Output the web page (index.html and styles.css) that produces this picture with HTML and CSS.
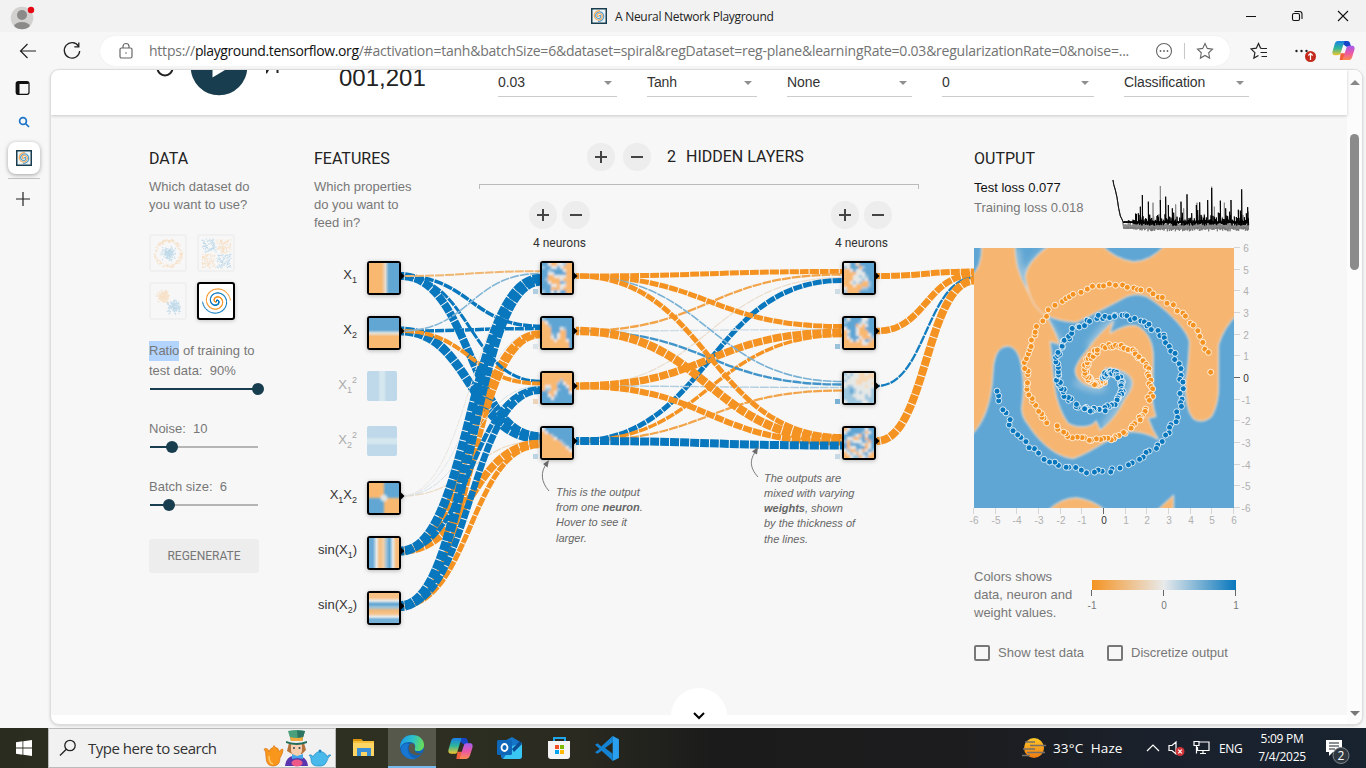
FILE: index.html
```html
<!DOCTYPE html>
<html lang="en">
<head>
<meta charset="utf-8">
<title>A Neural Network Playground</title>
<link rel="stylesheet" href="styles.css">
</head>
<body>
<svg width="0" height="0" class="defs">
  <defs>
    <symbol id="logo" viewBox="0 0 16 16">
      <rect x=".75" y=".75" width="14.5" height="14.5" fill="#eef4f6" stroke="#183d4e" stroke-width="1.500"/>
      <path d="M8 8Q9.500 6.500 9.800 8.500 9.500 11 7 10.500 4 9.500 4.800 6.500 6.500 3 10 4.200 13.500 6 12.500 10 11 13.500 7 13.300" fill="none" stroke="#5ba3d0" stroke-width="1.300"/>
      <path d="M8 8Q6.500 9.500 6.200 7.500 6.500 5 9 5.500 12 6.500 11.200 9.500 9.500 13 6 11.800 2.500 10 3.500 6 5 2.500 9 2.700" fill="none" stroke="#f5ae5e" stroke-width="1.200"/>
    </symbol>
    <symbol id="copilot" viewBox="0 0 24 22">
      <linearGradient id="cpa" x1="0" y1="0" x2="0" y2="1"><stop offset="0" stop-color="#1a7fe8"/><stop offset=".5" stop-color="#2db59a"/><stop offset="1" stop-color="#f3c62d"/></linearGradient>
      <linearGradient id="cpb" x1="0" y1="0" x2="0" y2="1"><stop offset="0" stop-color="#a45df0"/><stop offset=".5" stop-color="#e957a8"/><stop offset="1" stop-color="#ff8a4c"/></linearGradient>
      <path d="M9 1h7c2 0 2.500 1 3 3l1 3h-5L11 4z" fill="#1646c8"/>
      <path d="M8 21h6c2 0 3-1 3.500-3l1-4H9z" fill="#f2603b"/>
      <path d="M6 1h7l-4 13c-.5 1.700-1.500 2-3 2H3c-2.500 0-3-2-2.500-4L3 3.500C3.500 2 4.500 1 6 1z" fill="url(#cpa)"/>
      <path d="M18 6h3c2.500 0 3 2 2.500 4L21 18c-.6 2-2 3-4 3h-6l4-12.500C15.500 7 16 6 18 6z" fill="url(#cpb)"/>
    </symbol>
    <linearGradient id="scale"><stop offset="0" stop-color="#f59322"/><stop offset=".5" stop-color="#e8eaeb"/><stop offset="1" stop-color="#0877bd"/></linearGradient>
    <linearGradient id="gx1"><stop offset=".42" stop-color="#f9b870"/><stop offset=".55" stop-color="#e5dcd0"/><stop offset=".66" stop-color="#62a7d4"/></linearGradient>
    <linearGradient id="gx2" x1="0" y1="0" x2="0" y2="1"><stop offset=".4" stop-color="#62a7d4"/><stop offset=".5" stop-color="#e0e2df"/><stop offset=".62" stop-color="#f9b870"/></linearGradient>
    <linearGradient id="gq"><stop offset=".36" stop-color="#62a7d4"/><stop offset=".45" stop-color="#9ccbe0"/><stop offset=".57" stop-color="#9ccbe0"/><stop offset=".65" stop-color="#62a7d4"/></linearGradient>
    <linearGradient id="gqv" href="#gq" x1="0" y1="0" x2="0" y2="1"/>
    <linearGradient id="gs1"><stop offset="0" stop-color="#6aaad6"/><stop offset=".13" stop-color="#6aaad6"/><stop offset=".25" stop-color="#e6e8e8"/><stop offset=".36" stop-color="#f6bd7c"/><stop offset=".48" stop-color="#f1cfa8"/><stop offset=".6" stop-color="#91bfdc"/><stop offset=".68" stop-color="#5ba2d0"/><stop offset=".8" stop-color="#e8eaeb"/><stop offset=".9" stop-color="#f8bd7c"/><stop offset="1" stop-color="#f8bd7c"/></linearGradient>
    <linearGradient id="gs2" x1="0" y1="0" x2="0" y2="1"><stop offset="0" stop-color="#f7c084"/><stop offset=".15" stop-color="#f7c084"/><stop offset=".26" stop-color="#e8eaeb"/><stop offset=".37" stop-color="#5ba2d0"/><stop offset=".47" stop-color="#9cc3da"/><stop offset=".6" stop-color="#f6b873"/><stop offset=".7" stop-color="#f3c592"/><stop offset=".79" stop-color="#e8eaeb"/><stop offset=".88" stop-color="#74b0d8"/><stop offset="1" stop-color="#74b0d8"/></linearGradient>
    <filter id="soft"><feGaussianBlur stdDeviation=".9"/></filter>
    <filter id="edge"><feGaussianBlur stdDeviation="2.600"/></filter>
    <filter id="haze"><feGaussianBlur stdDeviation="9"/></filter>
    <clipPath id="cell"><rect width="30" height="30"/></clipPath>
    <clipPath id="mapclip"><rect x="42" y="39" width="780" height="780"/></clipPath>
  </defs>
</svg>

<header class="titlebar">
  <svg class="avatar" width="26" height="26" viewBox="0 0 26 26"><circle cx="12" cy="13" r="11.300" fill="#d3d1cf"/><circle cx="12" cy="10" r="5" fill="#8c8a88"/><path d="M4 21a8.500 6 0 0 1 16 0 11.300 11.300 0 0 1-16 0z" fill="#8c8a88"/><circle cx="21" cy="5" r="3.200" fill="#e50914"/></svg>
  <div class="window-title"><svg width="16" height="16"><use href="#logo"/></svg><span>A Neural Network Playground</span></div>
  <svg class="window-buttons" width="110" height="14" viewBox="0 0 110 14" fill="none" stroke="#111" stroke-width="1.100"><path d="M2 7.500h10M94 2l10 10M104 2L94 12"/><rect x="48.500" y="4.500" width="7" height="7" rx="1.500"/><path d="M50.500 2.500h5q2.500 0 2.500 2.500v5"/></svg>
</header>

<nav class="toolbar">
  <svg class="back" width="20" height="20" viewBox="0 0 20 20" fill="none" stroke="#222" stroke-width="1.200"><path d="M18 10H2.500M9.500 3L2.500 10l7 7"/></svg>
  <svg class="reload" width="20" height="20" viewBox="0 0 20 20" fill="none" stroke="#222" stroke-width="1.300"><path d="M16.500 5.200A7.700 7.700 0 1 0 17.700 10M16.800 1.500v4.300h-4.500"/></svg>
  <div class="address">
    <svg width="16" height="18" viewBox="0 0 16 18" fill="none" stroke="#666" stroke-width="1.200"><rect x="2" y="6" width="12" height="10" rx="1.500"/><path d="M5 6V4.500a3 3 0 0 1 6 0V6"/><circle cx="8" cy="11" r=".8" fill="#666" stroke="none"/></svg>
    <span class="url">https://<b>playground.tensorflow.org</b>/#activation=tanh&amp;batchSize=6&amp;dataset=spiral&amp;regDataset=reg-plane&amp;learningRate=0.03&amp;regularizationRate=0&amp;noise=...</span>
    <svg width="60" height="18" viewBox="0 0 60 18" fill="none" stroke="#666" stroke-width="1.100"><circle cx="9" cy="9" r="7.500"/><g fill="#666" stroke="none"><circle cx="5.500" cy="9" r=".9"/><circle cx="9" cy="9" r=".9"/><circle cx="12.500" cy="9" r=".9"/></g><path d="M29.500 1v16" stroke="#c8c8c8"/><path d="M50 1.500l2.300 4.900 5.200.7-3.800 3.700.9 5.300-4.600-2.600-4.600 2.600.9-5.300-3.800-3.700 5.200-.7z"/></svg>
  </div>
  <svg class="fav" width="18" height="18" viewBox="0 0 18 18" fill="none" stroke="#222" stroke-width="1.200"><path d="M11.500 6.500L10.500 6 8.500 1.500 6.300 6.200l-5.300.7 3.900 3.700-1 5.400 4.600-2.600M11.500 6.500H17M10.500 10.500H17M11.500 14.500H17"/></svg>
  <svg class="more" width="24" height="22" viewBox="0 0 24 22"><g fill="#222"><circle cx="3.500" cy="9" r="1.200"/><circle cx="8.500" cy="9" r="1.200"/><circle cx="13.500" cy="9" r="1.200"/></g><circle cx="17.500" cy="14.500" r="5.500" fill="#c42b1c"/><path d="M17.500 18v-6.500M15.300 13.500l2.200-2.200 2.200 2.200" stroke="#fff" stroke-width="1.200" fill="none"/></svg>
  <svg class="cop" width="23" height="21"><use href="#copilot"/></svg>
</nav>

<div class="workspace">
  <aside class="tabs">
    <svg width="16" height="16" viewBox="0 0 16 16"><rect x="1.200" y="1.700" width="12.800" height="12.600" rx="2" fill="none" stroke="#111" stroke-width="1.200"/><path d="M1 2.500h3.500V14.500H2.500Q1 14.500 1 13zM1.500 2h12v2h-12z" fill="#111"/></svg>
    <svg class="find" width="12" height="12" viewBox="0 0 12 12" fill="none" stroke="#1b74c9" stroke-width="1.700"><circle cx="5" cy="5" r="3.400"/><path d="M7.500 7.500L11 11"/></svg>
    <div class="active-tab"><svg width="16" height="16"><use href="#logo"/></svg></div>
    <svg class="new-tab" width="14" height="14" viewBox="0 0 14 14" stroke="#222" stroke-width="1.200"><path d="M7 0v14M0 7h14"/></svg>
  </aside>

  <div class="page">
    <div class="content">
      <section class="controls">
        <svg class="playback" width="140" height="26" viewBox="149 70 140 26"><circle cx="165" cy="68" r="7.500" fill="none" stroke="#222" stroke-width="2"/><circle cx="219" cy="67" r="28.300" fill="#183d4e"/><path d="M212.500 54v23.500L230 67z" fill="#fff"/><path d="M266 70h3l-2 3.500h-1zM276.500 70h2v3h-2z" fill="#222"/></svg>
        <div class="epoch">001,201</div>
        <div class="select s1">0.03</div>
        <div class="select s2">Tanh</div>
        <div class="select s3">None</div>
        <div class="select s4">0</div>
        <div class="select s5">Classification</div>
      </section>

      <main>
        <section class="data">
          <h4>DATA</h4>
          <p>Which dataset do<br>you want to use?</p>
          <div class="datasets">
            <svg id="d-circle" viewBox="0 0 34 34"></svg><svg id="d-xor" viewBox="0 0 34 34"></svg>
            <svg id="d-gauss" viewBox="0 0 34 34"></svg><svg id="d-spiral" class="chosen" viewBox="0 0 34 34"></svg>
          </div>
          <div class="field"><label><mark>Ratio</mark> of training to<br>test data: &nbsp;90%</label><svg width="118" height="18"><path d="M1 9h108" stroke="#183d4e" stroke-width="2"/><circle cx="109" cy="9" r="6" fill="#183d4e"/></svg></div>
          <div class="field"><label>Noise: &nbsp;10</label><svg width="118" height="18"><path d="M1 9h108" stroke="#b5b5b5" stroke-width="2"/><path d="M1 9h22" stroke="#183d4e" stroke-width="2"/><circle cx="23" cy="9" r="6" fill="#183d4e"/></svg></div>
          <div class="field"><label>Batch size: &nbsp;6</label><svg width="118" height="18"><path d="M1 9h108" stroke="#b5b5b5" stroke-width="2"/><path d="M1 9h19" stroke="#183d4e" stroke-width="2"/><circle cx="20" cy="9" r="6" fill="#183d4e"/></svg></div>
          <button class="regen">REGENERATE</button>
        </section>

        <section class="network">
          <div class="net-head">
            <div class="features"><h4>FEATURES</h4><p>Which properties<br>do you want to<br>feed in?</p></div>
            <div class="hidden">
              <div class="layer-row"><i class="round plus"></i><i class="round"></i><span class="count">2</span><span>HIDDEN LAYERS</span></div>
              <div class="bracket"></div>
              <div class="neuron-row">
                <div class="neurons"><div><i class="round plus"></i><i class="round"></i></div>4 neurons</div>
                <div class="neurons"><div><i class="round plus"></i><i class="round"></i></div>4 neurons</div>
              </div>
            </div>
          </div>
          <svg id="net" width="660" height="390" viewBox="314 250 660 390">
            <g id="links" fill="none"></g>
            <g id="nodes"></g>
            <g class="labels">
              <text x="357" y="279">X<tspan class="sub" dy="4">1</tspan></text>
              <text x="357" y="334">X<tspan class="sub" dy="4">2</tspan></text>
              <text class="off" x="357" y="389">X<tspan class="sub" dy="4">1</tspan><tspan class="sub" dy="-10">2</tspan></text>
              <text class="off" x="357" y="444">X<tspan class="sub" dy="4">2</tspan><tspan class="sub" dy="-10">2</tspan></text>
              <text x="357" y="499">X<tspan class="sub" dy="4">1</tspan><tspan dy="-4">X</tspan><tspan class="sub" dy="4">2</tspan></text>
              <text x="357" y="554">sin(X<tspan class="sub" dy="4">1</tspan><tspan dy="-4">)</tspan></text>
              <text x="357" y="609">sin(X<tspan class="sub" dy="4">2</tspan><tspan dy="-4">)</tspan></text>
            </g>
            <g fill="none" stroke="#7a7a7a"><path d="M549 491C541 482 540 472 547 463M758 477C749 467 750 459 756 451"/></g>
            <path d="M549 460l-6 4 4.500 3.500zM758 447l-6 4.500 5 3z" fill="#6a6a6a"/>
            <g class="callout">
              <text x="556" y="496">This is the output</text><text x="556" y="511">from one <tspan font-weight="bold">neuron</tspan>.</text><text x="556" y="526">Hover to see it</text><text x="556" y="542">larger.</text>
              <text x="764" y="482">The outputs are</text><text x="764" y="497">mixed with varying</text><text x="764" y="512"><tspan font-weight="bold">weights</tspan>, shown</text><text x="764" y="527">by the thickness of</text><text x="764" y="543">the lines.</text>
            </g>
          </svg>
        </section>

        <section class="output">
          <div class="out-head">
            <div><h4>OUTPUT</h4><div class="loss test">Test loss 0.077</div><div class="loss">Training loss 0.018</div></div>
            <svg id="chart" width="138" height="56" viewBox="1113 178 138 56" fill="none"></svg>
          </div>
          <svg id="heatmap" width="276" height="282" viewBox="974 248 276 282">
            <g transform="translate(960 235) scale(.333333)" clip-path="url(#mapclip)">
              <rect x="42" y="39" width="780" height="780" fill="#60a6d4"/>
              <g filter="url(#haze)" fill="none" stroke="#dfe5e6" stroke-width="14" opacity=".6"><path d="M170 40Q172 100 200 155L300 325M385 340Q415 285 460 255M195 120Q220 75 265 40M445 400Q520 410 515 450L430 580M345 440Q390 470 435 460"/></g>
              <g filter="url(#edge)" fill="#f6b671" stroke="#e4e5e1" stroke-width="3">
                <path d="M65 30L165 30C167 90 178 115 192 145C215 195 235 215 262 245C280 280 290 300 300 328L270 320C276 350 276 400 282 440C288 490 300 530 325 565Q350 580 385 573Q400 570 408 557Q416 570 420 585C450 565 475 530 490 500C500 480 518 465 517 442C515 420 490 402 435 400L437 445Q425 465 390 455Q345 440 345 405Q350 380 385 340C405 310 430 285 460 258L450 295Q500 265 530 272C560 285 580 320 580 365L578 500Q582 525 588 545L565 550Q577 585 596 614Q550 587 500 591C450 605 400 650 340 671C280 665 230 610 205 570Q183 545 185 515Q195 460 185 400C178 350 160 334 142 334C115 336 104 360 100 400C96 470 88 545 35 600V120Q65 100 65 30Z"/>
                <path d="M270 30Q202 77 195 125C205 180 220 215 250 237Q300 262 350 262C400 237 460 207 500 185Q530 173 560 185C610 215 680 280 688 320Q686 390 676 440Q675 525 700 552Q728 568 755 545Q775 510 776 460V330Q790 280 830 240V30H615Q570 80 520 80Q465 72 425 30Z"/>
                <path d="M265 825Q305 788 350 788Q400 795 435 825ZM592 825L641 780V825Z"/>
              </g>
            </g>
            <g id="dots" stroke="#fff" stroke-opacity=".8"></g>
            <g id="axes"></g>
          </svg>
          <div class="legend">
            <p>Colors shows<br>data, neuron and<br>weight values.</p>
            <svg width="160" height="36" viewBox="0 0 160 36"><rect x="6" width="144" height="10" fill="url(#scale)"/><path d="M5.500 10v6M77.500 10v6M149.500 10v6" stroke="#666"/><g class="ticks"><text x="6" y="29">-1</text><text x="78" y="29">0</text><text x="150" y="29">1</text></g></svg>
          </div>
          <div class="checks"><span><i></i>Show test data</span><span><i></i>Discretize output</span></div>
        </section>
      </main>
      <div class="more-circle"><svg width="14" height="10" viewBox="0 0 14 10"><path d="M2 2l5 5 5-5" fill="none" stroke="#000" stroke-width="2"/></svg></div>
    </div>
    <div class="scrollbar"><i class="up"></i><i class="thumb"></i><i class="down"></i></div>
  </div>
</div>

<footer class="taskbar">
  <div class="start"><svg width="16" height="16" viewBox="0 0 16 16" fill="#fff"><path d="M0 2.200L6.500 1.300V7.500H0zM7.300 1.200L16 0v7.500H7.300zM0 8.400h6.500v6.300L0 13.800zM7.300 8.400H16V16l-8.700-1.200z"/></svg></div>
  <div class="search">
    <svg width="18" height="18" viewBox="0 0 18 18" fill="none" stroke="#222" stroke-width="1.300"><circle cx="11" cy="6.500" r="5.200"/><path d="M7.300 10.200L1 16.500"/></svg>
    <span>Type here to search</span>
    <svg class="party" width="68" height="38" viewBox="0 0 68 38">
      <path d="M1 20q4-2 5 3 1-4 4-4.500l1-2 1.500 2q3 0 3.500 4 4-4 4-1.500 0 3-3 8 0 8-7 8t-7-9Q3 22 1 20z" fill="#f9961c" stroke="#d46c0b" stroke-width=".6"/>
      <path d="M6 27q0 7 4 8" stroke="#ffc768" stroke-width="1.500" fill="none"/>
      <path d="M22 37q1-9 8-10h6q8 1 9 10z" fill="#5a36ae"/><path d="M26 14h15l2 7-4 4H29l-5-3z" fill="#b5733c"/><path d="M28 14h11v8q-1 5-5.500 5T28 22z" fill="#f6cfae"/>
      <path d="M25 2q9-2 17 0l-3 10H28z" fill="#4aa07a"/><path d="M34 1.500q5 0 8 .5l-3 10h-4z" fill="#2b7562"/><path d="M27 8q7 2 13 0l-.5 4H28z" fill="#f0a93c"/><path d="M23 12q10 4 21 0v2q-10 4-21 0z" fill="#246d5a"/>
      <circle cx="31" cy="19" r="1" fill="#345"/><circle cx="36.500" cy="19" r="1" fill="#345"/><path d="M29 25l5 2 6-2v5l-6-1-5 1z" fill="#45a5e8"/><ellipse cx="34" cy="34" rx="5.500" ry="3.500" fill="#ee5a87"/>
      <path d="M46 26q3-1 4 2 2-5 7-5.500 6 .5 7 5.500 1-3 4-2-3 2-4 6-2 5-6 5h-4q-6 0-6-7-.5-3-2-4z" fill="#49b8ea" stroke="#1c86c4" stroke-width=".6"/><circle cx="57" cy="22" r="1.500" fill="#1c86c4"/>
    </svg>
  </div>
  <div class="apps">
    <div><svg width="24" height="20" viewBox="0 0 24 20"><path d="M1 1h8l2 2h11v15H1z" fill="#f5bf3a"/><path d="M1 1h8l1.500 2H1z" fill="#d9920b"/><path d="M1 5h21v13H1z" fill="#fdd565"/><path d="M5 18V10h14v8h-4v-4H9v4z" fill="#3b8fd6"/></svg></div>
    <div class="running"><svg width="26" height="26" viewBox="0 0 26 26"><linearGradient id="eg" x1="0" y1=".3" x2="1" y2=".5"><stop offset="0" stop-color="#1f9be8"/><stop offset=".5" stop-color="#2bc0c9"/><stop offset="1" stop-color="#69de55"/></linearGradient><circle cx="13" cy="13" r="12" fill="#1263b8"/><path d="M1 12C2 4 8 1 13 1c8 0 12 5 12 10 0 4-3 6-6 6-4 0-4-2-3-3 1-4-2-6-6-6-5 0-8 3-9 6z" fill="url(#eg)"/><path d="M16 13q-2 8 8 6-3 3-8 2-8-2-6-10 2-3 5-1z" fill="#56584c"/><path d="M10 10c-4 7 1 14 7 15-5 1-11-1-14-6C0 12 6 8 10 10z" fill="#1877d0"/></svg></div>
    <div><svg width="25" height="23"><use href="#copilot"/></svg></div>
    <div><svg width="26" height="24" viewBox="0 0 26 24"><path d="M4 7l11-6 10 6v13q0 3-3 3H7q-3 0-3-3z" fill="#1475c9"/><path d="M15 10l10-3v13q0 3-3 3H6z" fill="#39c6f3"/><path d="M15 13L23 5l2 3-8 8z" fill="#0b4c93"/><rect y="4" width="15" height="15" rx="1.500" fill="#0f67ba"/><ellipse cx="7.500" cy="11.500" rx="3" ry="3.500" fill="none" stroke="#fff" stroke-width="1.800"/></svg></div>
    <div><svg width="24" height="24" viewBox="0 0 24 24"><path d="M7 6V2h11v4" fill="none" stroke="#22a6ea" stroke-width="2"/><path d="M1 5h22v15q0 3-3 3H4q-3 0-3-3z" fill="#f4f4f4"/><path d="M8 9h4v4H8z" fill="#f25022"/><path d="M13 9h4v4h-4z" fill="#7fba00"/><path d="M8 14h4v4H8z" fill="#00a4ef"/><path d="M13 14h4v4h-4z" fill="#ffb900"/></svg></div>
    <div><svg width="25" height="25" viewBox="0 0 24 24"><path d="M17 0l6 3v18l-6 3z" fill="#2a9ff0"/><path d="M17 0L6 10 2.500 7 0 8.500 14 21l3 3V17L9 11l8-5z" fill="#1583d1"/><path d="M0 15.500L2.500 17 17 6V0L5 12z" fill="#1583d1"/></svg></div>
  </div>
  <div class="tray">
    <svg width="26" height="24" viewBox="0 0 26 24"><linearGradient id="sun" x1="0" y1="0" x2="0" y2="1"><stop offset="0" stop-color="#ffc928"/><stop offset="1" stop-color="#ef7a12"/></linearGradient><circle cx="13" cy="12" r="10" fill="url(#sun)"/><path d="M4 6h10M9 9.500h16M2 13h12M6 16.500h18M1 19.500h8" stroke="#77706a" stroke-width="1.300"/></svg>
    <span class="weather">33°C&nbsp; Haze</span>
    <svg class="tray-icons" width="66" height="18" viewBox="0 0 66 18" fill="none" stroke="#fff" stroke-width="1.200"><path d="M1 12l6-6 6 6M23 6.500h3l4-3.500v12l-4-3.500h-3zM52.500 3H63v8.500H51.500V8M57 11.500v3M54 14.500h6M48 2.500h5v4h-5zM50.500 6.500v8"/><circle cx="34" cy="12.500" r="4.500" fill="#d13438" stroke="none"/><path d="M32.200 10.700l3.600 3.600M35.800 10.700l-3.600 3.600" stroke-width="1.100"/></svg>
    <span class="lang">ENG</span>
    <span class="clock">5:09 PM<br>7/4/2025</span>
    <svg class="notes" width="26" height="26" viewBox="0 0 26 26"><path d="M1 2h16v12H8l-4 4v-4H1z" fill="#fff"/><path d="M4 5h10M4 8h10M4 11h6" stroke="#1b222c" stroke-width="1"/><circle cx="16" cy="17.500" r="8" fill="#303840" stroke="#83888c"/><text x="16" y="22" text-anchor="middle" fill="#fff" font-family="Open Sans" font-size="12">2</text></svg>
  </div>
</footer>
<script src="playground.js"></script>
</body>
</html>
```
FILE: styles.css
```css
* { box-sizing: border-box; }
body { margin: 0; width: 1366px; height: 768px; overflow: hidden; display: flex; flex-direction: column; background: #f7f7f7; font-family: "Liberation Sans", Arial, sans-serif; }
.defs { position: absolute; }
svg { display: block; flex: none; }
h4, p { margin: 0; }

.titlebar { height: 32px; background: #f2f2f2; display: flex; align-items: center; font: 12px "Open Sans", sans-serif; color: #222; flex: none; }
.avatar { margin: 3px 0 0 10px; }
.window-title { display: flex; align-items: center; gap: 8px; margin-left: 555px; width: 300px; white-space: nowrap; letter-spacing: -.28px; }
.window-buttons { margin-left: 353px; }

.toolbar { height: 37px; display: flex; align-items: center; flex: none; }
.back { margin-left: 18px; }
.reload { margin-left: 24px; }
.address { margin: 1px 0 0 18px; width: 1130px; height: 30px; border-radius: 15px; background: #fff; display: flex; align-items: center; padding-left: 18px; box-shadow: 0 0 1px #ddd; }
.url { font: 14px "Open Sans", sans-serif; letter-spacing: -.23px; color: #737373; margin: -1px 0 0 15px; width: 1006px; white-space: nowrap; }
.url b { font-weight: 400; color: #111; letter-spacing: -.38px; }
.fav { margin-left: 20px; }
.more { margin: 4px 0 0 25px; }
.cop { margin-left: 15px; }

.workspace { flex: 1; display: flex; min-height: 0; }
.tabs { width: 50px; display: flex; flex-direction: column; align-items: center; padding: 11px 4px 0 0; flex: none; }
.find { margin: 20px 0 0 2px; }
.active-tab { width: 32px; height: 37px; margin: 14px 0 0 2px; border-bottom: 1px solid #c4c4c4; flex: none; }
.active-tab svg { padding: 8px; width: 32px; height: 32px; background: #fff; border-radius: 8px; box-shadow: 0 1px 4px rgba(0,0,0,.35); }
.new-tab { margin-top: 13px; }

.page { width: 1313px; height: 656px; flex: none; background: #fff; border: 1px solid #ddd; border-radius: 9px; display: flex; overflow: hidden; box-shadow: 0 1px 3px rgba(0,0,0,.15); }
.content { width: 1296px; position: relative; }
.controls { height: 45px; display: flex; padding-left: 98px; box-shadow: 0 1px 3px rgba(0,0,0,.2); position: relative; }
.playback { width: 140px; }
.epoch { font-size: 24px; line-height: 28px; height: 28px; margin: -6px 0 0 50px; width: 159px; color: #222; }
.select { height: 27px; border-bottom: 1px solid #ccc; font-size: 14px; line-height: 25px; color: #333; margin-right: 30px; position: relative; letter-spacing: -.1px; }
.select::after { content: ""; position: absolute; right: 5px; top: 11px; border: 4.500px solid transparent; border-top-color: #8f8f8f; border-bottom: 0; }
.s1 { width: 119px; } .s2 { width: 110px; } .s3 { width: 125px; } .s4 { width: 152px; } .s5 { width: 125px; }

main { height: 600px; background: #f7f7f7; padding: 33px 0 0 98px; display: grid; grid-template-columns: 165px 660px 276px; color: #777; font-size: 13px; line-height: 18px; }
h4 { font: 400 16px/20px Roboto, sans-serif; color: #222; padding-top: 1px; margin-bottom: 9px; }
.datasets { display: grid; grid-template-columns: 38px 38px; gap: 10px; margin: 20px 0; }
.datasets svg { width: 38px; height: 38px; border: 2px solid #d9d9d9; border-radius: 3px; opacity: .22; }
.datasets .chosen { border-color: #000; background: #fff; opacity: 1; box-shadow: 0 1px 4px rgba(0,0,0,.2); }
.field { line-height: 20px; margin-bottom: 20px; }
.field label { display: block; padding-top: 1px; margin-bottom: -1px; }
mark { display: inline-block; height: 20px; background: #b3d4fe; color: #777; }
.regen { display: block; width: 110px; height: 34px; margin-top: 25px; border: 0; border-radius: 3px; background: #ededed; color: #777; font: 12px Roboto, sans-serif; padding: 0; }

.net-head { display: flex; height: 102px; }
.features { width: 165px; }
.hidden { width: 440px; margin-top: -5px; font-family: Roboto, sans-serif; color: #222; }
.layer-row { display: flex; align-items: center; gap: 8px; padding-left: 108px; font-size: 16px; }
.layer-row .count { margin: 0 2px 0 8px; }
.round { display: block; width: 28px; height: 28px; border-radius: 50%; background: linear-gradient(#444,#444) center / 12px 2px no-repeat #ededed; }
.plus { background: linear-gradient(#444,#444) center / 12px 2px no-repeat, linear-gradient(#444,#444) center / 2px 12px no-repeat #ededed; }
.bracket { height: 5px; margin-top: 13px; border: 1px solid #bbb; border-bottom: 0; }
.neuron-row { display: flex; gap: 241px; padding: 12px 0 0 50px; font-size: 12px; }
.neurons { width: 61px; text-align: center; color: #333; line-height: 28px; white-space: nowrap; }
.neurons div { display: flex; gap: 5px; }
#net { overflow: visible; }
.labels { font-size: 13px; fill: #333; text-anchor: end; }
.labels .sub { font-size: 9px; }
.labels .off { fill: #aaa; }
.callout { font-size: 11px; font-style: italic; fill: #666; }

.out-head { display: flex; justify-content: space-between; height: 100px; }
.loss { line-height: 20px; white-space: nowrap; }
.loss.test { color: #111; }
#chart { margin-top: 30px; }
#heatmap, .legend svg { overflow: visible; }
.ticks, #axes { font-size: 10px; text-anchor: middle; fill: #777; }
.legend { display: flex; margin-top: 38px; white-space: nowrap; }
.legend p { width: 112px; }
.legend svg { margin-top: 12px; }
.checks { display: flex; margin-top: 22px; line-height: 18px; white-space: nowrap; }
.checks span { display: flex; align-items: center; width: 133px; }
.checks i { width: 16px; height: 16px; border: 2px solid #777; border-radius: 2px; margin-right: 8px; }
.more-circle { position: absolute; left: 620px; top: 618px; width: 56px; height: 56px; border-radius: 50%; background: #fff; display: flex; justify-content: center; padding-top: 23px; }

.scrollbar { width: 15px; background: #fcfcfc; display: flex; flex-direction: column; align-items: center; padding: 10px 0 8px; }
.scrollbar i { display: block; }
.up { border: 5px solid transparent; border-bottom-color: #888; border-top: 0; }
.thumb { width: 9px; height: 136px; border-radius: 5px; background: #8b8b8b; margin-top: 49px; }
.down { border: 5px solid transparent; border-top-color: #777; border-bottom: 0; margin-top: auto; }

.taskbar { height: 40px; flex: none; margin-top: auto; background: linear-gradient(90deg,#2a2c1f 0,#2e3022 30%,#2a2a20 42%,#1b1b1b 52%,#1c1c1e 70%,#1a212c 85%,#182330 100%); display: flex; color: #fff; font: 12px "Open Sans", sans-serif; }
.start { width: 48px; display: flex; align-items: center; justify-content: center; }
.search { width: 288px; background: #f1f1f1; border: 1px solid #bbb; display: flex; align-items: center; color: #333; font-size: 15px; padding-left: 10px; }
.search span { margin-left: 11px; width: 165px; letter-spacing: -.5px; white-space: nowrap; }
.party { margin-left: 10px; }
.apps { display: flex; padding-left: 3px; }
.apps div { width: 49px; display: flex; align-items: center; justify-content: center; }
.apps .running { background: #56584c; border-bottom: 2px solid #76b9ed; width: 48px; }
.tray { display: flex; align-items: center; margin-left: 389px; white-space: nowrap; }
.weather { font-size: 13.500px; margin-left: 6px; width: 87px; letter-spacing: .15px; }
.tray-icons { margin-left: 6px; }
.lang { margin-left: 7px; width: 26px; letter-spacing: -.3px; }
.clock { text-align: center; line-height: 18px; width: 50px; margin-left: 12px; letter-spacing: -.3px; }
.notes { margin-left: 18px; margin-top: 5px; }
```
FILE: playground.js
```js
const NS = 'http://www.w3.org/2000/svg';
const ORANGE = '#f59322', BLUE = '#0877bd';
const $ = id => document.getElementById(id);

function el(parent, tag, attrs, text) {
  const e = document.createElementNS(NS, tag);
  for (const k in attrs) e.setAttribute(k, attrs[k]);
  if (text !== undefined) e.textContent = text;
  parent.appendChild(e);
  return e;
}

// mulberry32 generator, so that every load draws the same points
let seed = 91;
function rand() {
  seed = (seed + 0x6D2B79F5) | 0;
  let t = Math.imul(seed ^ (seed >>> 15), 1 | seed);
  t = (t + Math.imul(t ^ (t >>> 7), 61 | t)) ^ t;
  return ((t ^ (t >>> 14)) >>> 0) / 4294967296;
}

// weight in [-1, 1] to a colour between orange, grey and blue
function color(w) {
  const a = Math.min(1, Math.abs(w));
  const end = w < 0 ? [245, 147, 34] : [8, 119, 189];
  return 'rgb(' + [232, 234, 235].map((v, i) => Math.round(v + (end[i] - v) * a)) + ')';
}

function link(x1, y1, x2, y2, w, width) {
  const m = (x1 + x2) / 2;
  el($('links'), 'path', {
    d: `M${x1} ${y1}C${m} ${y1} ${m} ${y2} ${x2} ${y2}`,
    stroke: color(w), 'stroke-width': width, 'stroke-dasharray': '9 1', 'stroke-dashoffset': -4
  });
}
const rows = [276, 331, 386, 441];
const inputs = [276, 331, 496, 551, 606];
// per neuron: [colour weight, stroke width] of each incoming link
const layer1 = [
  [[-.6, 2], [.45, 1.6], [-.05, 1], [1, 9], [1, 10]],
  [[1, 3.5], [1, 3.5], [.03, 1], [-1, 6.5], [-1, 5]],
  [[1, 3], [-1, 4], [.08, 1], [1, 4.5], [1, 6.5]],
  [[1, 8], [1, 9], [-.2, 1.2], [-1, 7.5], [-1, 5]]
];
const layer2 = [
  [[-1, 5], [-.8, 2.3], [-.15, 1.2], [1, 5]],
  [[-1, 5], [.12, 1.4], [-1, 7.5], [-1, 3.5]],
  [[.5, 1.6], [.75, 2.4], [.25, 1.4], [-.8, 2.2]],
  [[-1, 5], [-1, 8.5], [-1, 6], [1, 8]]
];
[3, 1, 2, 0].forEach(j => layer1[j].forEach(([w, s], i) => link(401, inputs[i], 540, rows[j] + (i - 2) * 2.4, w, s)));
layer2.forEach((ws, j) => ws.forEach(([w, s], i) => link(576, rows[i], 842, rows[j] + (i - 1.5) * 3, w, s)));
[[-1, 6], [-1, 6.5], [.95, 2.3], [-1, 8]].forEach(([w, s], i) => link(877, rows[i], 975, 276 + (i - 1.5) * 3, w, s));

function node(x, y, draw) {
  const g = el($('nodes'), 'g', { transform: `translate(${x} ${y})` });
  g.style.filter = 'drop-shadow(0 1px 2px rgba(0,0,0,.25))';
  el(g, 'path', { d: 'M31 8.500L35.500 13 31 17.500z' });
  el(g, 'rect', { x: -1, y: -1, width: 32, height: 32, rx: 2, fill: '#62a7d4', stroke: '#000', 'stroke-width': 2 });
  draw(el(g, 'g', { 'clip-path': 'url(#cell)' }));
}
const grad = id => g => el(g, 'rect', { width: 30, height: 30, fill: `url(#${id})` });
node(369, 263, grad('gx1'));
node(369, 318, grad('gx2'));
el($('nodes'), 'rect', { x: 367, y: 371, width: 30, height: 30, rx: 2, fill: 'url(#gq)', opacity: .38 });
el($('nodes'), 'rect', { x: 367, y: 426, width: 30, height: 30, rx: 2, fill: 'url(#gqv)', opacity: .38 });
node(369, 483, g => {
  const f = el(g, 'g', { filter: 'url(#soft)' });
  el(f, 'path', { d: 'M-3 -3H15V15H-3zM15 15H34V34H15z', fill: '#f9b870' });
  el(f, 'circle', { cx: 15, cy: 15, r: 3.5, fill: '#dfe3e2' });
});
node(369, 538, grad('gs1'));
node(369, 593, grad('gs2'));

// neuron activations sampled on a 10 x 10 grid
const shades = { O: '#f9b870', o: '#f6d7b6', w: '#e6e8e6', b: '#9dc6df', B: '#5fa5d3' };
const thumbs = [
  [542, 263, 'BBwOOwwbOO bBBwwBwOOO BBbBBBBwOO BBwwBBBBOO BBOOwwwwOO BbOOOOwOOO BBwOOOBbOO BBBwwOwwOO BBBOOOwOOO bBBwBwBBOO'],
  [542, 318, 'bBBBBBBBBB OwBBBBBBBB OObBBBBBBB OOOBBBwbBB OOOBBBOOBB OOObBwOOBB OOOwBwOOBB OOOOwOOOwB OOOOOOOOOB OOOOOOOOOB'],
  [542, 373, 'OOOOOOOOOO OOOOOOOOOO OOOOOObOOO OOOOObBwOO OwwOOBBBwO ObbOObBBBO BBOOwBBBBw BBwObBBBBB BBBwBBBBBB BBBBBBBBBB'],
  [542, 428, 'wBBBBBBBBB OwBBBBBBBB OOObBBBBBB OOOOwBBBBB OOOOOObBBB OOOOOOObBB OOOOOOOOwB OOOOOOOOOw OOOOOOOOOO OOOOOOOOOO'],
  [844, 263, 'wwBBoBBBBB bwBBBObBBB OOwBwwBBBB OOOOwwwBBB OOOwwbwbBB OOOwwwbwBB OOwbwbOObB OOOwOOOObB wOOOOObbBB bOOOOBBBBB'],
  [844, 318, 'BwBBBBwwBB bBBBBbwbBB BBBBOwOwBB wBBBwOOBBB OwBBwOOOBB ObBBwOOOwB OwBBBwOOOb OOwBwOwBbO OOOOOOwwOO OOOOOOOOOO'],
  [844, 373, 'bwbwwoowoo wbwwwooooo bwwwooooww wwwwoowwwo wbbwwwwoww bbBbwwwwwb bbBbwbwwwb bbbwwwwbwb bbbbwwwbbb wbbbbbwwbb'],
  [844, 428, 'OwBBBBBwBB wBBBBBbOwB BBBbwOBwBB BwwOObBOBB bObwwwBbOB BOBBBbwOwB BOwwBBBOwB wbOObwOwBb OwbwOwbBwO OOwbbOwbOO']
];
thumbs.forEach(([x, y, grid]) => node(x, y, g => {
  const f = el(g, 'g', { filter: 'url(#soft)' });
  const cells = grid.split(' ');
  for (let r = -1; r <= 10; r++) for (let c = -1; c <= 10; c++) {
    const key = cells[Math.max(0, Math.min(9, r))][Math.max(0, Math.min(9, c))];
    el(f, 'rect', { x: c * 3, y: r * 3, width: 3.1, height: 3.1, fill: shades[key] });
  }
}));
// bias squares
[533, 835].forEach(x => rows.forEach((y, i) => {
  const w = x < 600 ? [.25, .05, -.25, .2][i] : [.12, .35, .5, .15][i];
  el($('nodes'), 'rect', { x, y: y + 13, width: 5, height: 5, fill: color(w) });
}));

// training points on two interleaved spirals
function spiral(delta, n, noise, draw) {
  for (let i = 0; i < n; i++) {
    const r = i / n * 5, t = 1.75 * i / n * 2 * Math.PI + delta;
    draw(r * Math.sin(t) + (rand() * 2 - 1) * noise, r * Math.cos(t) + (rand() * 2 - 1) * noise);
  }
}
[[Math.PI, ORANGE], [0, BLUE]].forEach(([d, fill]) => spiral(d, 190, .1, (x, y) => {
  if (rand() > .07) el($('dots'), 'circle', { cx: 1104 + x * 21.67, cy: 378 - y * 21.67, r: 3, fill });
}));

for (let v = -6; v <= 6; v++) {
  const x = Math.round(1104 + v * 21.67) - .5, y = Math.round(378 - v * 21.67) - .5;
  const zero = v === 0;
  el($('axes'), 'path', { d: `M${x} 508v6M1234 ${y}h6`, stroke: zero ? '#666' : '#d5d5d5' });
  const fill = zero ? '#333' : '#b0b0b0';
  el($('axes'), 'text', { x: x + .5, y: 524, fill }, v);
  el($('axes'), 'text', { x: 1246, y: y + 4, fill }, v);
}

// loss curves with their spikes
const black = { 550: 585, 567: 605, 543: 620, 603: 600, 620: 590, 627: 615, 640: 625, 665: 605, 684: 583, 712: 615, 745: 600, 757: 564, 783: 602, 800: 625, 815: 600, 847: 568, 862: 640 };
const grey = { 582: 608, 603: 558, 650: 613, 674: 625, 713: 608, 766: 620, 757: 560, 796: 608, 868: 635 };
function curve(spikes, base, stroke, amp) {
  const peaks = Object.keys(spikes).map(Number);
  let d = 'M462 540L464 553 469 570 474 592 479 625 484 648 490 660';
  for (let x = 494; x < 869; x += 2) {
    const near = peaks.find(k => k >= x - 1 && k < x + 1);
    const growth = Math.min(1, (x - 480) / 70);
    const y = near ? spikes[near] : base - rand() * rand() * rand() * amp * growth;
    d += `L${x} ${base + 4}L${x} ${y}L${x + 1} ${base + rand() * 12 * growth}`;
  }
  el($('chart'), 'path', { d, stroke, 'stroke-width': 2.8, transform: 'translate(960 0) scale(.33333)' });
}
curve({}, 682, '#777', 18);
curve(grey, 676, '#888', 50);
curve(black, 665, '#000', 65);

// dataset thumbnails
function speck(svg, x, y, fill) { el(svg, 'rect', { x, y, width: 1.1, height: 1.1, fill }); }
function gauss() { return rand() + rand() + rand() - 1.5; }
for (let i = 0; i < 170; i++) {
  const a = rand() * 6.283, r = 11 + rand() * 3.5;
  speck($('d-circle'), 17 + r * Math.cos(a), 17 + r * Math.sin(a), ORANGE);
  speck($('d-circle'), 17 + gauss() * 6, 17 + gauss() * 6, BLUE);
  speck($('d-gauss'), 12 + gauss() * 5.5, 12 + gauss() * 5.5, ORANGE);
  speck($('d-gauss'), 22.5 + gauss() * 5.5, 22.5 + gauss() * 5.5, BLUE);
}
for (let i = 0; i < 340; i++) {
  const x = rand() * 28, y = rand() * 28;
  speck($('d-xor'), 2.5 + x + (x > 14 ? 1 : 0), 2.5 + y + (y > 14 ? 1 : 0), (x > 14) === (y > 14) ? BLUE : ORANGE);
}
[[Math.PI, ORANGE], [0, BLUE]].forEach(([dl, fill]) => spiral(dl, 140, 0, (x, y) =>
  el($('d-spiral'), 'circle', { cx: 17.5 + x * 2.8, cy: 17 - y * 2.8, r: .6, fill })));
```
